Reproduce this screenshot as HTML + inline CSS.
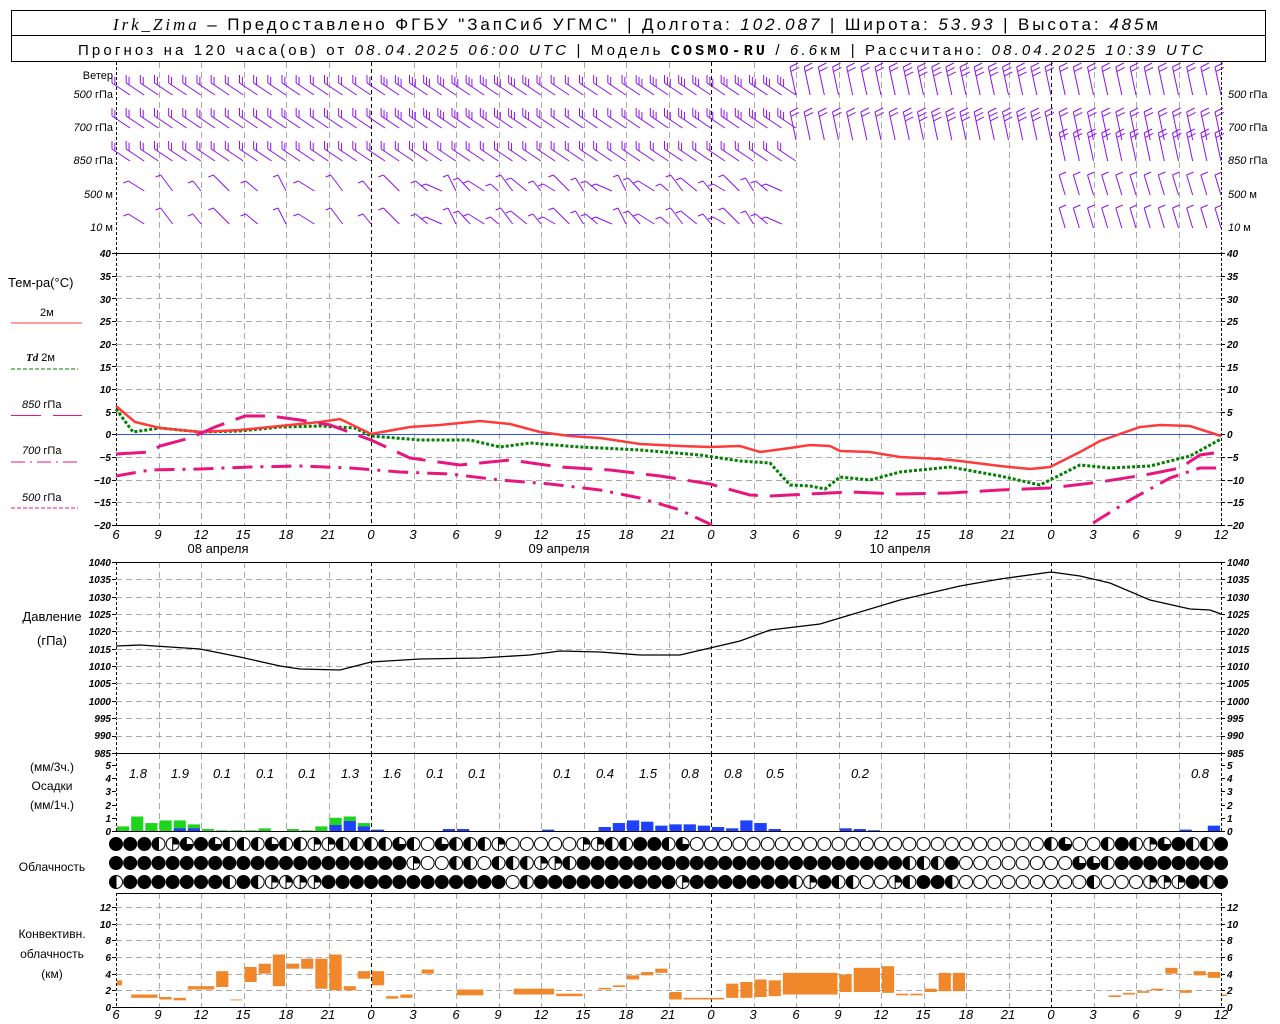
<!DOCTYPE html>
<html><head><meta charset="utf-8">
<style>
html,body{margin:0;padding:0;background:#fff;width:1280px;height:1024px;overflow:hidden}
svg{position:absolute;left:0;top:0}
text{font-family:"Liberation Sans",sans-serif;fill:#000}
.t{font-size:10px;font-style:italic;font-weight:bold}
.l{font-size:12px}
.b{font-size:13px;font-style:italic}
</style></head><body>
<svg id="s" width="1280" height="1024" viewBox="0 0 1280 1024" xmlns="http://www.w3.org/2000/svg">
<rect x="11.5" y="10.5" width="1254" height="51" fill="none" stroke="#000"/>
<line x1="11" y1="35.5" x2="1265" y2="35.5" stroke="#000"/>
<text x="113" y="30" font-size="17" textLength="1045" lengthAdjust="spacing"><tspan font-family="Liberation Serif" font-style="italic">Irk_Zima</tspan> – Предоставлено ФГБУ "ЗапСиб УГМС" | Долгота: <tspan font-style="italic">102.087</tspan> | Широта: <tspan font-style="italic">53.93</tspan> | Высота: <tspan font-style="italic">485</tspan>м</text>
<text x="78" y="55" font-size="15" textLength="1125" lengthAdjust="spacing">Прогноз на 120 часа(ов) от <tspan font-style="italic">08.04.2025 06:00 UTC</tspan>  | Модель <tspan font-family="Liberation Mono" font-weight="bold">COSMO-RU</tspan> / <tspan font-style="italic">6.6</tspan>км | Рассчитано: <tspan font-style="italic">08.04.2025 10:39 UTC</tspan></text>
<g id="grid"></g>
<g id="data"></g>
<g class="l" font-size="11">
<text x="113" y="79" text-anchor="end" font-size="11">Ветер</text>
<text x="113" y="98" text-anchor="end" font-size="11"><tspan font-style="italic">500</tspan> гПа</text>
<text x="113" y="131" text-anchor="end" font-size="11"><tspan font-style="italic">700</tspan> гПа</text>
<text x="113" y="164" text-anchor="end" font-size="11"><tspan font-style="italic">850</tspan> гПа</text>
<text x="113" y="198" text-anchor="end" font-size="11"><tspan font-style="italic">500</tspan>  м</text>
<text x="113" y="231" text-anchor="end" font-size="11"><tspan font-style="italic">10</tspan>   м</text>
<text x="1228" y="98" font-size="11"><tspan font-style="italic">500</tspan> гПа</text>
<text x="1228" y="131" font-size="11"><tspan font-style="italic">700</tspan> гПа</text>
<text x="1228" y="164" font-size="11"><tspan font-style="italic">850</tspan> гПа</text>
<text x="1228" y="198" font-size="11"><tspan font-style="italic">500</tspan>  м</text>
<text x="1228" y="231" font-size="11"><tspan font-style="italic">10</tspan>   м</text>
</g>
<text x="8" y="287" font-size="13">Тем-ра(°C)</text>
<text x="40" y="316" font-size="11">2м</text>
<line x1="11" y1="323" x2="82" y2="323" stroke="#ff3a3a"/>
<text x="26" y="361" font-size="11"><tspan font-style="italic" font-weight="bold" font-family="Liberation Serif">Td</tspan>  2м</text>
<line x1="11" y1="369" x2="78" y2="369" stroke="#008000" stroke-dasharray="4,2"/>
<text x="22" y="408" font-size="11"><tspan font-style="italic">850</tspan> гПа</text>
<line x1="11" y1="415.5" x2="82" y2="415.5" stroke="#e8157f" stroke-dasharray="30,12"/>
<text x="22" y="454" font-size="11"><tspan font-style="italic">700</tspan> гПа</text>
<line x1="11" y1="462" x2="78" y2="462" stroke="#e8157f" stroke-dasharray="14,5,2,5"/>
<text x="22" y="501" font-size="11"><tspan font-style="italic">500</tspan> гПа</text>
<line x1="11" y1="508" x2="78" y2="508" stroke="#e8157f" stroke-dasharray="4,2"/>
<text x="218" y="553" font-size="13" text-anchor="middle">08 апреля</text>
<text x="559" y="553" font-size="13" text-anchor="middle">09 апреля</text>
<text x="900" y="553" font-size="13" text-anchor="middle">10 апреля</text>
<text x="52" y="621" font-size="13" text-anchor="middle">Давление</text>
<text x="52" y="645" font-size="13" text-anchor="middle">(гПа)</text>
<text x="52" y="771" font-size="12" text-anchor="middle">(мм/3ч.)</text>
<text x="52" y="790" font-size="12" text-anchor="middle">Осадки</text>
<text x="52" y="809" font-size="12" text-anchor="middle">(мм/1ч.)</text>
<text x="52" y="871" font-size="12" text-anchor="middle">Облачность</text>
<text x="52" y="938" font-size="12" text-anchor="middle">Конвективн.</text>
<text x="52" y="958" font-size="12" text-anchor="middle">облачность</text>
<text x="52" y="978" font-size="12" text-anchor="middle">(км)</text>
<g class="b">
<text x="138" y="778" text-anchor="middle">1.8</text><text x="180" y="778" text-anchor="middle">1.9</text>
<text x="222" y="778" text-anchor="middle">0.1</text><text x="265" y="778" text-anchor="middle">0.1</text>
<text x="307" y="778" text-anchor="middle">0.1</text><text x="350" y="778" text-anchor="middle">1.3</text>
<text x="392" y="778" text-anchor="middle">1.6</text><text x="435" y="778" text-anchor="middle">0.1</text>
<text x="477" y="778" text-anchor="middle">0.1</text><text x="562" y="778" text-anchor="middle">0.1</text>
<text x="605" y="778" text-anchor="middle">0.4</text><text x="648" y="778" text-anchor="middle">1.5</text>
<text x="690" y="778" text-anchor="middle">0.8</text><text x="733" y="778" text-anchor="middle">0.8</text>
<text x="775" y="778" text-anchor="middle">0.5</text><text x="860" y="778" text-anchor="middle">0.2</text>
<text x="1200" y="778" text-anchor="middle">0.8</text>
</g>
<g class="t" text-anchor="end">
<text x="111" y="257">40</text><text x="111" y="280">35</text><text x="111" y="303">30</text><text x="111" y="325">25</text><text x="111" y="348">20</text><text x="111" y="371">15</text><text x="111" y="393">10</text><text x="111" y="416">5</text><text x="111" y="438">0</text><text x="111" y="461">−5</text><text x="111" y="484">−10</text><text x="111" y="506">−15</text><text x="111" y="529">−20</text>
<text x="111" y="566">1040</text><text x="111" y="583">1035</text><text x="111" y="601">1030</text><text x="111" y="618">1025</text><text x="111" y="635">1020</text><text x="111" y="653">1015</text><text x="111" y="670">1010</text><text x="111" y="687">1005</text><text x="111" y="705">1000</text><text x="111" y="722">995</text><text x="111" y="739">990</text><text x="111" y="757">985</text>
<text x="111" y="769">5</text><text x="111" y="782">4</text><text x="111" y="795">3</text><text x="111" y="809">2</text><text x="111" y="822">1</text><text x="111" y="835">0</text>
<text x="111" y="911">12</text><text x="111" y="928">10</text><text x="111" y="944">8</text><text x="111" y="961">6</text><text x="111" y="978">4</text><text x="111" y="994">2</text><text x="111" y="1011">0</text>
</g>
<g class="t">
<text x="1227" y="257">40</text><text x="1227" y="280">35</text><text x="1227" y="303">30</text><text x="1227" y="325">25</text><text x="1227" y="348">20</text><text x="1227" y="371">15</text><text x="1227" y="393">10</text><text x="1227" y="416">5</text><text x="1227" y="438">0</text><text x="1227" y="461">−5</text><text x="1227" y="484">−10</text><text x="1227" y="506">−15</text><text x="1227" y="529">−20</text>
<text x="1227" y="566">1040</text><text x="1227" y="583">1035</text><text x="1227" y="601">1030</text><text x="1227" y="618">1025</text><text x="1227" y="635">1020</text><text x="1227" y="653">1015</text><text x="1227" y="670">1010</text><text x="1227" y="687">1005</text><text x="1227" y="705">1000</text><text x="1227" y="722">995</text><text x="1227" y="739">990</text><text x="1227" y="757">985</text>
<text x="1227" y="769">5</text><text x="1227" y="782">4</text><text x="1227" y="795">3</text><text x="1227" y="809">2</text><text x="1227" y="822">1</text><text x="1227" y="835">0</text>
<text x="1227" y="911">12</text><text x="1227" y="928">10</text><text x="1227" y="944">8</text><text x="1227" y="961">6</text><text x="1227" y="978">4</text><text x="1227" y="994">2</text><text x="1227" y="1011">0</text>
</g>
<g class="b" text-anchor="middle" font-size="14">
<text x="116" y="539">6</text><text x="158" y="539">9</text><text x="201" y="539">12</text><text x="243" y="539">15</text><text x="286" y="539">18</text><text x="328" y="539">21</text><text x="371" y="539">0</text><text x="413" y="539">3</text><text x="456" y="539">6</text><text x="498" y="539">9</text><text x="541" y="539">12</text><text x="583" y="539">15</text><text x="626" y="539">18</text><text x="668" y="539">21</text><text x="711" y="539">0</text><text x="753" y="539">3</text><text x="796" y="539">6</text><text x="838" y="539">9</text><text x="881" y="539">12</text><text x="923" y="539">15</text><text x="966" y="539">18</text><text x="1008" y="539">21</text><text x="1051" y="539">0</text><text x="1093" y="539">3</text><text x="1136" y="539">6</text><text x="1178" y="539">9</text><text x="1221" y="539">12</text>
<text x="116" y="1019">6</text><text x="158" y="1019">9</text><text x="201" y="1019">12</text><text x="243" y="1019">15</text><text x="286" y="1019">18</text><text x="328" y="1019">21</text><text x="371" y="1019">0</text><text x="413" y="1019">3</text><text x="456" y="1019">6</text><text x="498" y="1019">9</text><text x="541" y="1019">12</text><text x="583" y="1019">15</text><text x="626" y="1019">18</text><text x="668" y="1019">21</text><text x="711" y="1019">0</text><text x="753" y="1019">3</text><text x="796" y="1019">6</text><text x="838" y="1019">9</text><text x="881" y="1019">12</text><text x="923" y="1019">15</text><text x="966" y="1019">18</text><text x="1008" y="1019">21</text><text x="1051" y="1019">0</text><text x="1093" y="1019">3</text><text x="1136" y="1019">6</text><text x="1178" y="1019">9</text><text x="1221" y="1019">12</text>
</g>
</svg>
<script>
var NS="http://www.w3.org/2000/svg";
var G=document.getElementById("grid"),D=document.getElementById("data");
function el(p,tag,a){var e=document.createElementNS(NS,tag);for(var k in a)e.setAttribute(k,a[k]);p.appendChild(e);return e;}
function X(t){return 116+t*42.5/3;}
function line(p,x1,y1,x2,y2,c,da,w){var a={x1:x1,y1:y1,x2:x2,y2:y2,stroke:c||"#000","stroke-width":w||1};if(da)a["stroke-dasharray"]=da;return el(p,"line",a);}
var panels=[[62,253],[253,525],[562,753],[753,831],[893,1007]];
for(var i=0;i<=26;i++){var x=Math.round(X(i*3))+0.5;var mid=(i==6||i==14||i==22);
 panels.forEach(function(p){ if(i==0||i==26) line(G,x,p[0],x,p[1],"#000","3,2");
 else line(G,x,p[0],x,p[1],mid?"#000":"#aaa",mid?"4,3":"6,4");});}
for(var v=35;v>=-15;v-=5){var y=Math.round(253+(40-v)*4.533)+0.5;line(G,116,y,1221,y,"#aaa","6,4");}
for(var v=1035;v>=990;v-=5){var y=Math.round(562+(1040-v)*3.47)+0.5;line(G,116,y,1221,y,"#aaa","6,4");}
for(var v=2;v<=12;v+=2){var y=Math.round(1007-v*8.33)+0.5;line(G,116,y,1221,y,"#aaa","6,4");}
[253.5,525.5,562.5,753.5,831.5,893.5,1007.5].forEach(function(y){line(G,116,y,1221,y,"#000");});
function ticks(y){line(G,112,y,116,y);line(G,1221,y,1225,y);}
for(var v=40;v>=-20;v-=5)ticks(Math.round(253+(40-v)*4.533)+0.5);
for(var v=1040;v>=985;v-=5)ticks(Math.round(562+(1040-v)*3.47)+0.5);
for(var v=0;v<=5;v++)ticks(Math.round(831-v*13.2)+0.5);
for(var v=0;v<=12;v+=2)ticks(Math.round(1007-v*8.33)+0.5);
line(G,116,434.5,1221,434.5,"#3050ff");
function pl(pts,c,w,da){var a={points:pts,fill:"none",stroke:c,"stroke-width":w};if(da)a["stroke-dasharray"]=da;el(D,"polyline",a);}
pl("116,646 140,645 170,647 200,649 240,657 280,666 300,669 340,670 371,662 420,659 480,658 530,655 560,651 600,652 640,655 680,655 710,648 740,641 770,630 820,624 860,612 900,600 960,586 1000,579 1051,572 1080,576 1110,583 1150,600 1190,609 1210,610 1221,614","#000",1.3);
pl("116,409 133,432 160,428 200,432 240,431 280,427 320,426 355,428 371,436 420,440 470,440 500,447 530,443 580,447 640,450 700,455 740,461 770,463 790,485 810,486 825,489 840,477 870,480 900,472 950,467 1000,476 1040,485 1080,465 1110,468 1150,466 1190,456 1221,439","#008000",3,"3,2");
pl("116,406 135,422 160,428 200,432 240,430 280,426 320,422 340,419 371,434 410,427 440,425 480,421 510,424 540,432 570,436 600,438 640,444 680,446 710,447 740,446 760,452 790,448 810,445 830,446 840,451 870,452 900,457 940,459 960,461 1000,466 1030,469 1050,467 1080,452 1100,441 1140,427 1160,425 1190,426 1221,436","#ff3a3a",2.5);
pl("116,454 150,452 160,446 190,438 215,427 245,416 270,416 300,420 330,425 371,440 410,458 460,465 510,460 560,467 610,470 660,476 710,484 750,495 770,496 850,492 900,494 950,493 1000,490 1050,488 1100,482 1150,474 1180,468 1200,455 1221,452","#e8157f",3,"30,12");
pl("116,476 150,470 200,469 250,467 300,466 350,468 400,472 450,474 500,480 550,484 600,490 640,498 680,510 712,525","#e8157f",3,"20,8,3,8");
pl("1093,523 1130,500 1170,478 1200,468 1221,468","#e8157f",3,"20,8,3,8");
var pr={0:[.35,0],1:[1.1,0],2:[.6,0],3:[.8,0],4:[.8,.2],5:[.5,.2],6:[.15,0],7:[.05,0],8:[.05,0],9:[.05,0],10:[.2,0],12:[.15,0],13:[.05,0],14:[.35,0],15:[1.0,.45],16:[1.1,.75],17:[.6,.35],18:[.1,.1],23:[.15,.15],24:[.15,.15],30:[.1,.1],34:[.3,.3],35:[.6,.6],36:[.8,.8],37:[.7,.7],38:[.4,.4],39:[.5,.5],40:[.5,.5],41:[.4,.4],42:[.3,.3],43:[.2,.2],44:[.8,.8],45:[.6,.6],46:[.15,.15],51:[.2,.2],52:[.15,.15],53:[.05,.05],75:[.1,.1],77:[.4,.4],78:[.9,.9]};
for(var k in pr){var t=+k,x0=X(t)+1,x1=Math.min(X(t+1),1221),tot=pr[k][0],bl=pr[k][1];
 el(D,"rect",{x:x0,y:831-tot*13.2,width:x1-x0-1,height:tot*13.2,fill:"#1fd41f"});
 if(bl>0)el(D,"rect",{x:x0,y:831-bl*13.2,width:x1-x0-1,height:bl*13.2,fill:"#2040ff"});}
var cv=[[0,.5,2.6,3.2],[1,3,1.1,1.5],[3,4,.9,1.2],[4,5,.8,1.1],[5,7,2.1,2.5],[7,8,2.4,4.3],[8,9,.8,.9],[9,10,3,4.8],[10,11,4,5.2],[11,12,2.5,6.3],[12,13,4.6,5.2],[13,14,4.6,5.8],[14,15,2.2,5.8],[15,16,2,6.3],[16,17,2,2.5],[17,18,3.4,4.3],[18,19,2.6,4.3],[19,20,1,1.3],[20,21,1.1,1.5],[21.5,22.5,4,4.5],[24,26,1.4,2.1],[28,31,1.5,2.2],[31,33,1.3,1.6],[34,35,2.1,2.3],[35,36,2.4,2.6],[36,37,3.3,3.8],[37,38,3.8,4.2],[38,39,4.1,4.6],[39,40,.9,1.8],[40,43,.9,1.1],[43,44,1.1,2.8],[44,45,1.1,3.0],[45,46,1.2,3.3],[46,47,1.3,3.2],[47,51,1.5,4.1],[51,52,1.8,3.9],[52,54,1.8,4.7],[54,55,1.7,4.9],[55,56,1.4,1.6],[56,57,1.4,1.6],[57,58,1.8,2.2],[58,59,1.9,4.1],[59,60,1.9,4.1],[70,71,1.2,1.4],[71,72,1.5,1.7],[72,73,1.7,1.9],[73,74,2,2.2],[74,75,4,4.7],[75,76,1.7,2],[76,77,3.8,4.3],[77,78,3.5,4.2],[78,78.5,1.3,1.5]];
cv.forEach(function(c){var x0=X(c[0])+1,x1=X(c[1]);el(D,"rect",{x:x0,y:1007-c[3]*8.33,width:x1-x0-1,height:(c[3]-c[2])*8.33,fill:"#f0872a"});});
var rows=["FFFHqQFQHHHQHHqqHHHHQHEQHHHqEEEEEqqHHFFHQEEEEEEEEEEEEEEEEEEEEEEEEEHQEEHFHqQFHHF",
"FFFFFFFFFFFFFFFFFFFFFqEEHHEHHHqqHFFFFFFFFFFFFFFFFFFFFFFFHHHFEEEEEEEEQQHFFFFFFFF",
"HFFFFFFFHFHqqqqFFFFFFFFFFFFFEHFFFFFFFFFFqFFFFFFFHqFHHEEqHFFHEEEEEEEEEHEEEqqqFHF"];
var ry=[844,863,882],r=6.5;
rows.forEach(function(s,ri){for(var i=0;i<79;i++){var c=s[i]||"E",cy=ry[ri],cx=116+i*(1105/78);
 el(D,"circle",{cx:cx,cy:cy,r:r,fill:c=="F"?"#000":"#fff",stroke:"#000","stroke-width":1});
 if(c=="H"){el(D,"path",{d:"M"+cx+","+(cy-r)+"A"+r+","+r+" 0 0 0 "+cx+","+(cy+r)+"Z",fill:"#000"});line(D,cx,cy-r,cx,cy+r);}
 if(c=="q"){el(D,"path",{d:"M"+cx+","+cy+"L"+cx+","+(cy-r)+"A"+r+","+r+" 0 0 1 "+(cx+r)+","+cy+"Z",fill:"#000"});line(D,cx,cy-r,cx,cy+r);line(D,cx,cy,cx+r,cy);}
 if(c=="Q"){el(D,"path",{d:"M"+cx+","+cy+"L"+(cx+r)+","+cy+"A"+r+","+r+" 0 1 1 "+cx+","+(cy-r)+"Z",fill:"#000"});}
}});
var WC="#9010f0";
function barb(x,y,dx,dy,n,fx,fy){line(D,x,y,x+dx,y+dy,WC);for(var j=0;j<n;j++){var px=x+dx*(1-j*0.16),py=y+dy*(1-j*0.16);line(D,px,py,px+fx,py+fy,WC);}}
var lv=[95,128,161,195,228];
for(var i=0;i<79;i++){var x=116+i*(1105/78),t=i;
 for(var l=0;l<5;l++){var y=lv[l];
  if(l>=3&&(t<1||(t>=48&&t<67)))continue;
  if(l==2&&t>=48&&t<67)continue;
  if(l>=3&&t<22&&t%2)continue;
  if(t<48){
   var n=l<2?(t>18&&t<30||t>36&&t<48?3:2):(l==2?2:1);
   if(l>=3){barb(x,y-4,-8-(t%3)*4,-16+(t%4)*3,1,-5,2);}
   else barb(x+14,y,-18,-12,n,0,-8);
  } else {
   var n=l<2?(t>55&&t<66?3:2):2;
   if(l>=3) barb(x,y,-6,-20,1,7,-3);
   else barb(x,y+(l==1?12:0),-6,-28,n,8,-4);
  }
 }}
</script>
</body></html>
